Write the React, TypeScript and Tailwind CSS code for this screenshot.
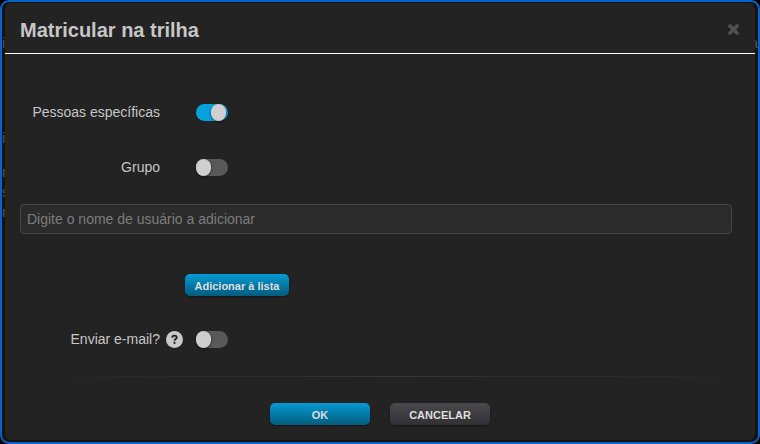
import { useState } from "react";

function Switch({ id, initial = false }: { id: string; initial?: boolean }) {
  const [on, setOn] = useState(initial);
  return (
    <span className="relative inline-flex h-[17px] w-8 shrink-0">
      <input
        id={id}
        type="checkbox"
        role="switch"
        checked={on}
        onChange={(e) => setOn(e.target.checked)}
        className="peer h-full w-full cursor-pointer appearance-none rounded-full bg-[#595959] checked:bg-[#07a1de]"
      />
      <span className="pointer-events-none absolute left-0 top-0 h-[17px] w-[15px] rounded-full bg-[#cfcfcf] shadow-[0_1px_3px_rgba(0,0,0,0.5)] peer-checked:left-[15px]" />
    </span>
  );
}

function HelpIcon() {
  return (
    <button type="button" aria-label="Ajuda" className="flex h-[17px] w-[17px] shrink-0 cursor-pointer">
      <svg viewBox="0 0 17 17" className="h-full w-full" aria-hidden="true">
        <circle cx="8.5" cy="8.5" r="8.5" fill="#cacaca" />
        <path d="M6.2 6.6C6.3 5.1 7.3 4.6 8.5 4.6c1.3 0 2.2.7 2.2 1.8 0 1.6-2.2 1.6-2.2 3.4" fill="none" stroke="#232323" strokeWidth="1.9" />
        <rect x="7.5" y="10.8" width="2" height="2" fill="#232323" />
      </svg>
    </button>
  );
}

function BackgroundPage() {
  return (
    <div aria-hidden="true" className="absolute inset-0 overflow-hidden text-sm leading-4 text-[#555]">
      <span className="absolute left-0 top-[33px]">i</span>
      <span className="absolute left-0 top-[128px]">i</span>
      <span className="absolute left-0 top-[162px]">r</span>
      <span className="absolute left-0 top-[182px]">s</span>
      <span className="absolute left-0 top-[202px]">r</span>
      <span className="absolute right-0 top-[33px]">a</span>
    </div>
  );
}

const primary = "bg-linear-to-b from-[#059bd3] to-[#035c7e]";
const button =
  "h-[22px] cursor-pointer rounded-[5px] pt-0.5 text-[11px] font-bold text-[#dedede] shadow-[0_1px_2px_rgba(0,0,0,0.4)]";

export default function App() {
  return (
    <div className="relative min-h-screen bg-black font-['Liberation_Sans',Arial,sans-serif] text-[#c6c6c6]">
      <div className="relative flex min-h-screen flex-col overflow-hidden rounded-[9px] border-2 border-[#0862cb] bg-[#131313] px-[3px] pb-[2px] pt-px">
        <BackgroundPage />
        <section role="dialog" aria-labelledby="title" className="relative flex-1 rounded-md bg-[#232323]">
          <header className="flex h-[51px] items-center justify-between border-b border-white pl-[15px] pr-4">
            <h1 id="title" className="pt-1 text-xl font-bold leading-6">Matricular na trilha</h1>
            <button type="button" aria-label="Fechar" className="cursor-pointer pt-0.5">
              <svg viewBox="0 0 11 11" className="h-[11px] w-[11px]" aria-hidden="true">
                <path d="M2.2 2.2l6.6 6.6M8.8 2.2L2.2 8.8" stroke="#505050" strokeWidth="3.6" strokeLinecap="square" />
              </svg>
            </button>
          </header>
          <form className="text-sm leading-[17px]" onSubmit={(e) => e.preventDefault()}>
            <div className="flex items-center gap-9 pt-[50px]">
              <label htmlFor="people" className="w-[155px] text-right">Pessoas específicas</label>
              <Switch id="people" initial />
            </div>
            <div className="flex items-center gap-9 pt-[38px]">
              <label htmlFor="group" className="w-[155px] text-right">Grupo</label>
              <Switch id="group" />
            </div>
            <div className="pl-[15px] pr-[23px] pt-7">
              <input
                type="text"
                aria-label="Nome de usuário"
                placeholder="Digite o nome de usuário a adicionar"
                className="block h-[30px] w-full rounded border border-[#474747] bg-[#2b2b2b] px-1.5 text-sm text-[#cccccc] placeholder:text-[#7d7d7d]"
              />
            </div>
            <div className="flex pl-[180px] pt-10">
              <button type="button" className={`${button} ${primary} w-[104px]`}>Adicionar à lista</button>
            </div>
            <div className="flex items-center pt-[35px]">
              <label htmlFor="email" className="w-[155px] text-right">Enviar e-mail?</label>
              <span className="flex w-9 pl-1.5"><HelpIcon /></span>
              <Switch id="email" />
            </div>
            <hr className="ml-[66px] mr-[35px] mt-[28px] h-px border-0 bg-linear-to-r from-[#262626] via-[#343434] to-[#262626]" />
            <div className="flex justify-center gap-5 pb-[15px] pt-[26px]">
              <button type="submit" className={`${button} ${primary} w-[100px]`}>OK</button>
              <button type="button" className={`${button} w-[100px] bg-linear-to-b from-[#4a4a4e] to-[#303035]`}>CANCELAR</button>
            </div>
          </form>
        </section>
      </div>
    </div>
  );
}
